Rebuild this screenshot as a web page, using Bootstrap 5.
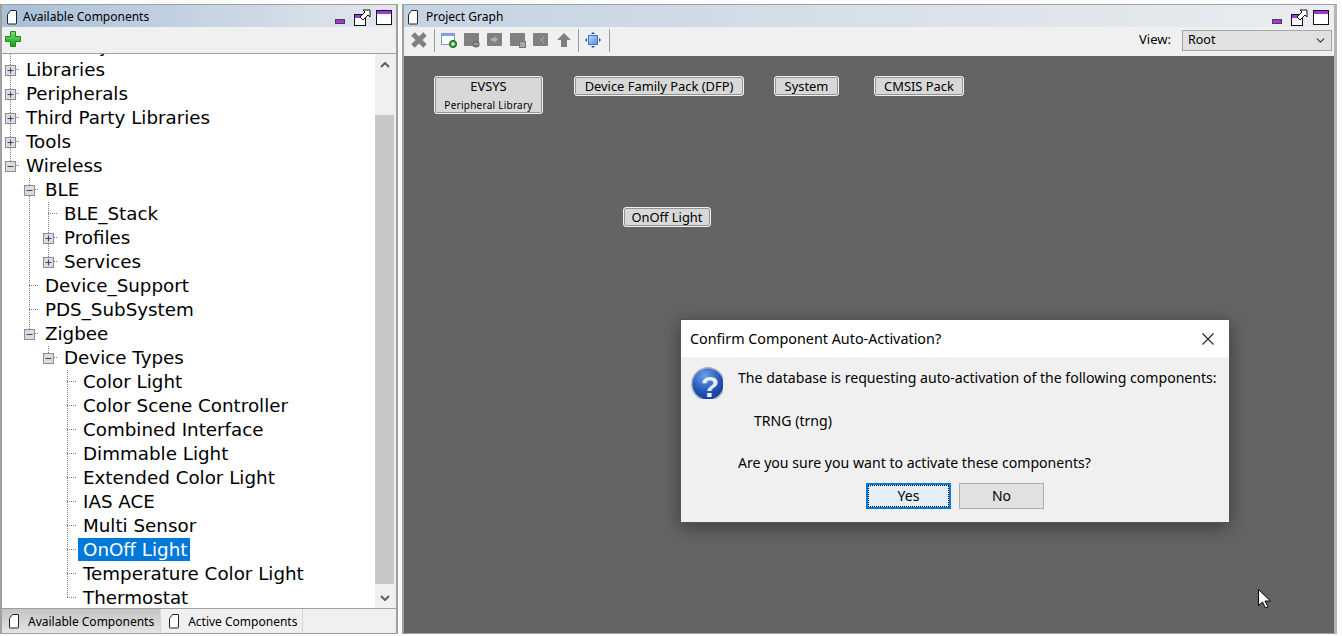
<!DOCTYPE html>
<html lang="en">
<head>
  <meta charset="UTF-8">
  <title>Project Graph</title>
  <meta name="viewport" content="width=device-width, initial-scale=1">
  <link href="https://cdn.jsdelivr.net/npm/bootstrap@5.3.3/dist/css/bootstrap.min.css" rel="stylesheet">
  <style>
    html, body { height: 100%; }
    body {
      background: #fbfbfb;
      font-family: "Noto Sans", sans-serif;
      font-size: 12px;
      color: #000;
      overflow: hidden;
    }
    .desk { height: 636px; padding: 4px 5px 2px 0; gap: 4px; position: relative; }
    .pane { border: 2px solid #a0a0a0; border-top-width: 1px; border-bottom-width: 1px; background: #f0f0f0; min-width: 0; }
    .pane-left { width: 398px; flex: none; }
    .pane-right { flex: 1 1 0; border-right: 3px solid #b4b4b4; }
    .pane-title { height: 22px; padding-left: 4px; padding-top: 2px; flex: none; }
    .pane-left .pane-title { background: linear-gradient(to right, #a8bfd8, #e3e7ec); }
    .pane-right .pane-title { background: linear-gradient(to right, #c4d3e2, #ebedef); padding-left: 3px; }
    .pane-title .title-text { margin-left: 6px; font-size: 12px; line-height: 20px; }
    .pane-right .title-text { margin-left: 8px; }
    .win-btns { margin-left: auto; padding-right: 4px; gap: 5px; }
    .pane-right .win-btns { padding-right: 5px; }
    .tool-left { height: 27px; padding: 0 0 2px 3px; flex: none; border-bottom: 1px solid #a0a0a0; }
    .tool-right { height: 29px; padding: 0 0 3px 6px; flex: none; gap: 7px; }
    .tool-sep { width: 1px; height: 23px; background: #a0a0a0; margin: 0 -1px; }
    .tool-fit { margin-right: 2px; }
    .view-label { margin-left: auto; margin-right: 1px; font-size: 13px; }
    .view-select {
      width: 150px; height: 21px; margin: 0 2px 0 3px;
      padding: 0 20px 0 5px;
      border: 1px solid #a6a6a6; border-radius: 0;
      background-color: #e1e1e1;
      background-position: right 5px center;
      background-size: 11px 9px;
      font-size: 12.5px; color: #000;
    }

    .tree-wrap { min-height: 0; background: #fff; }
    .tree-list { flex: 1 1 0; overflow: hidden; min-width: 0; }
    .tree-inner { margin: -20px 0 0 -1px; }
    .tree-row { height: 24px; font-family: "DejaVu Sans", sans-serif; font-size: 18.3px; line-height: 24px; white-space: nowrap; }
    .cell { width: 19px; height: 24px; flex: none; display: flex; align-items: center; justify-content: center; }
    .dot-v { background: repeating-linear-gradient(to bottom, #808080 0 1px, transparent 1px 2px) 9px 0 / 1px 100% no-repeat; }
    .dot-tee {
      background:
        repeating-linear-gradient(to bottom, #808080 0 1px, transparent 1px 2px) 9px 0 / 1px 100% no-repeat,
        repeating-linear-gradient(to right, #808080 0 1px, transparent 1px 2px) 9px 11px / 10px 1px no-repeat;
    }
    .dot-end {
      background:
        repeating-linear-gradient(to bottom, #808080 0 1px, transparent 1px 2px) 9px 0 / 1px 12px no-repeat,
        repeating-linear-gradient(to right, #808080 0 1px, transparent 1px 2px) 9px 11px / 10px 1px no-repeat;
    }
    .toggle { width: 11px; height: 11px; display: block; }
    .tree-label { padding: 0 3px 0 5px; margin-left: 1px; line-height: 23px; height: 23px; }
    .tree-label-on { background: #0078d7; color: #fff; }
    .scroll-track { width: 21px; flex: none; background: #f0f0f0; }
    .scroll-arrow { height: 21px; flex: none; padding-right: 2px; }
    .scroll-gap-top { height: 40px; flex: none; }
    .scroll-thumb { flex: 1 1 0; background: #c8c8c8; margin-right: 2px; }
    .scroll-gap-bottom { height: 3px; flex: none; }

    .tab-strip { height: 25px; flex: none; border-top: 1px solid #a0a0a0; background: #f0f0f0; }
    .tab-item { height: 24px; padding: 1px 5px 0 7px; gap: 9px; font-size: 12px; border-right: 1px solid #d4d4d4; }
    .tab-item:first-child { padding-left: 6px; padding-right: 6px; }
    .tab-item-on { background: linear-gradient(to bottom, #c4c4c4, #e4e4e4); }

    .graph { flex: 1 1 0; background: #646464; position: relative; overflow: hidden; }
    .graph-node {
      position: absolute;
      top: 20px;
      height: 20px;
      background: #d8d8d8;
      border: 1px solid #f0f0f0;
      border-radius: 3px;
      box-shadow: inset 0 0 0 1px #929292;
      font-size: 12.9px;
      line-height: 19px;
      text-align: center;
      white-space: nowrap;
    }
    .node-evsys { left: 30px; width: 109px; height: 38px; }
    .node-dfp { left: 170px; width: 170px; }
    .node-system { left: 370px; width: 65px; }
    .node-cmsis { left: 470px; width: 90px; }
    .node-onoff { left: 219px; top: 151px; width: 88px; }
    .node-sub { font-size: 10px; line-height: 14px; letter-spacing: .25px; margin-top: 2px; }

    .confirm-box {
      position: absolute; left: 681px; top: 320px; width: 548px; height: 202px;
      background: #f0f0f0;
      box-shadow: 0 0 0 1px #555, 0 4px 18px rgba(0,0,0,.45);
    }
    .confirm-head { height: 37px; background: #fff; padding-left: 9px; font-size: 14.35px; flex: none; }
    .confirm-close { margin-left: auto; margin-right: 15px; display: block; }
    .confirm-body { padding: 10px 0 0 10px; gap: 15px; font-size: 14.1px; }
    .confirm-msg { line-height: 20px; padding-top: 1px; }
    .confirm-line { margin-bottom: 22px; white-space: nowrap; }
    .confirm-line:first-child { margin-bottom: 23px; }
    .confirm-item { padding-left: 16px; }
    .confirm-btns { gap: 8px; position: absolute; left: 185px; top: 126px; }
    .dlg-btn {
      width: 85px; height: 26px; padding: 0; border-radius: 0;
      font-size: 14px; line-height: 22px; color: #000;
      background: #e1e1e1; border: 1px solid #adadad;
    }
    .dlg-btn-on {
      background: #e5edf5; border: 2px solid #0078d7;
      outline: 1px dotted #000; outline-offset: -3px;
    }
    .pointer { position: absolute; left: 1258px; top: 589px; display: block; }
  </style>
</head>
<body>

  <svg width="0" height="0" class="position-absolute">
    <defs>
      <symbol id="ico-doc" viewBox="0 0 11 15">
        <path d="M1.500 4.500 4.500.5h5.500q.5 0 .5.5v12.500q0 .5-.5.5h-8q-.5 0-.5-.5z" fill="#fff" stroke="#222"/>
      </symbol>
      <symbol id="ico-min" viewBox="0 0 10 5">
        <rect x=".5" y=".5" width="9" height="4" fill="#a235e6" stroke="#444"/>
      </symbol>
      <symbol id="ico-rest" viewBox="0 0 17 17">
        <rect x=".5" y="5.500" width="11" height="11" fill="#fff" stroke="#111"/>
        <rect x="1" y="6" width="10" height="3" fill="#a235e6"/>
        <path d="M6 8 11 3 9 1h7v7l-2-2-5 5z" fill="#fff" stroke="#111"/>
      </symbol>
      <symbol id="ico-max" viewBox="0 0 16 15">
        <rect x=".5" y=".5" width="15" height="14" fill="#fff" stroke="#111"/>
        <rect x="1" y="1" width="14" height="3" fill="#a235e6"/>
      </symbol>
      <symbol id="ico-plus" viewBox="0 0 11 11">
        <rect x=".5" y=".5" width="10" height="10" fill="#dcdcdc" stroke="#8c8c8c"/>
        <path d="M2.500 5.500h6M5.500 2.500v6" stroke="#2a4a8c"/>
      </symbol>
      <symbol id="ico-minus" viewBox="0 0 11 11">
        <rect x=".5" y=".5" width="10" height="10" fill="#dcdcdc" stroke="#8c8c8c"/>
        <path d="M2.500 5.500h6" stroke="#2a4a8c"/>
      </symbol>
      <symbol id="ico-win" viewBox="0 0 16 16">
        <rect x="0" y="1" width="15" height="13" rx="1" fill="#808080"/>
      </symbol>
      <linearGradient id="grad-green" x1="0" y1="0" x2="0" y2="1">
        <stop offset="0" stop-color="#7fe07f"/>
        <stop offset="1" stop-color="#12a012"/>
      </linearGradient>
      <linearGradient id="grad-fit" x1="0" y1="0" x2="1" y2="1">
        <stop offset="0" stop-color="#bcd8fb"/>
        <stop offset="1" stop-color="#4f8fe8"/>
      </linearGradient>
      <radialGradient id="grad-help" cx=".4" cy=".25" r=".85">
        <stop offset="0" stop-color="#6a9fe8"/>
        <stop offset=".55" stop-color="#2458b8"/>
        <stop offset="1" stop-color="#0f3490"/>
      </radialGradient>
      <clipPath id="clip-help"><rect width="32" height="32"/></clipPath>
    </defs>
  </svg>

  <div class="desk d-flex">

    <!-- left: component tree -->
    <div class="pane pane-left d-flex flex-column">
      <div class="pane-title d-flex align-items-center">
        <svg width="11" height="15"><use href="#ico-doc"/></svg>
        <span class="title-text">Available Components</span>
        <div class="win-btns d-flex align-items-center">
          <svg width="10" height="5" class="mt-2 me-1"><use href="#ico-min"/></svg>
          <svg width="17" height="17"><use href="#ico-rest"/></svg>
          <svg width="16" height="15"><use href="#ico-max"/></svg>
        </div>
      </div>
      <div class="tool-left d-flex align-items-center">
        <svg width="16" height="16" viewBox="0 0 16 16">
          <path d="M5.500.5h5v5h5v5h-5v5h-5v-5h-5v-5h5z" fill="url(#grad-green)" stroke="#1c8a1c"/>
        </svg>
      </div>
      <div class="tree-wrap d-flex flex-grow-1">
        <div class="tree-list">
          <div class="tree-inner">
            <div class="tree-row d-flex"><span class="cell dot-tee"></span><span class="tree-label">Harmony</span></div>
            <div class="tree-row d-flex"><span class="cell dot-tee"><svg class="toggle"><use href="#ico-plus"/></svg></span><span class="tree-label">Libraries</span></div>
            <div class="tree-row d-flex"><span class="cell dot-tee"><svg class="toggle"><use href="#ico-plus"/></svg></span><span class="tree-label">Peripherals</span></div>
            <div class="tree-row d-flex"><span class="cell dot-tee"><svg class="toggle"><use href="#ico-plus"/></svg></span><span class="tree-label">Third Party Libraries</span></div>
            <div class="tree-row d-flex"><span class="cell dot-tee"><svg class="toggle"><use href="#ico-plus"/></svg></span><span class="tree-label">Tools</span></div>
            <div class="tree-row d-flex"><span class="cell dot-end"><svg class="toggle"><use href="#ico-minus"/></svg></span><span class="tree-label">Wireless</span></div>
            <div class="tree-row d-flex"><span class="cell"></span><span class="cell dot-tee"><svg class="toggle"><use href="#ico-minus"/></svg></span><span class="tree-label">BLE</span></div>
            <div class="tree-row d-flex"><span class="cell"></span><span class="cell dot-v"></span><span class="cell dot-tee"></span><span class="tree-label">BLE_Stack</span></div>
            <div class="tree-row d-flex"><span class="cell"></span><span class="cell dot-v"></span><span class="cell dot-tee"><svg class="toggle"><use href="#ico-plus"/></svg></span><span class="tree-label">Profiles</span></div>
            <div class="tree-row d-flex"><span class="cell"></span><span class="cell dot-v"></span><span class="cell dot-end"><svg class="toggle"><use href="#ico-plus"/></svg></span><span class="tree-label">Services</span></div>
            <div class="tree-row d-flex"><span class="cell"></span><span class="cell dot-tee"></span><span class="tree-label">Device_Support</span></div>
            <div class="tree-row d-flex"><span class="cell"></span><span class="cell dot-tee"></span><span class="tree-label">PDS_SubSystem</span></div>
            <div class="tree-row d-flex"><span class="cell"></span><span class="cell dot-end"><svg class="toggle"><use href="#ico-minus"/></svg></span><span class="tree-label">Zigbee</span></div>
            <div class="tree-row d-flex"><span class="cell"></span><span class="cell"></span><span class="cell dot-end"><svg class="toggle"><use href="#ico-minus"/></svg></span><span class="tree-label">Device Types</span></div>
            <div class="tree-row d-flex"><span class="cell"></span><span class="cell"></span><span class="cell"></span><span class="cell dot-tee"></span><span class="tree-label">Color Light</span></div>
            <div class="tree-row d-flex"><span class="cell"></span><span class="cell"></span><span class="cell"></span><span class="cell dot-tee"></span><span class="tree-label">Color Scene Controller</span></div>
            <div class="tree-row d-flex"><span class="cell"></span><span class="cell"></span><span class="cell"></span><span class="cell dot-tee"></span><span class="tree-label">Combined Interface</span></div>
            <div class="tree-row d-flex"><span class="cell"></span><span class="cell"></span><span class="cell"></span><span class="cell dot-tee"></span><span class="tree-label">Dimmable Light</span></div>
            <div class="tree-row d-flex"><span class="cell"></span><span class="cell"></span><span class="cell"></span><span class="cell dot-tee"></span><span class="tree-label">Extended Color Light</span></div>
            <div class="tree-row d-flex"><span class="cell"></span><span class="cell"></span><span class="cell"></span><span class="cell dot-tee"></span><span class="tree-label">IAS ACE</span></div>
            <div class="tree-row d-flex"><span class="cell"></span><span class="cell"></span><span class="cell"></span><span class="cell dot-tee"></span><span class="tree-label">Multi Sensor</span></div>
            <div class="tree-row d-flex"><span class="cell"></span><span class="cell"></span><span class="cell"></span><span class="cell dot-tee"></span><span class="tree-label tree-label-on">OnOff Light</span></div>
            <div class="tree-row d-flex"><span class="cell"></span><span class="cell"></span><span class="cell"></span><span class="cell dot-tee"></span><span class="tree-label">Temperature Color Light</span></div>
            <div class="tree-row d-flex"><span class="cell"></span><span class="cell"></span><span class="cell"></span><span class="cell dot-end"></span><span class="tree-label">Thermostat</span></div>
          </div>
        </div>
        <div class="scroll-track d-flex flex-column">
          <div class="scroll-arrow d-flex align-items-center justify-content-center">
            <svg width="10" height="6" viewBox="0 0 10 6"><path d="M1 5 5 1l4 4" fill="none" stroke="#606060" stroke-width="2"/></svg>
          </div>
          <div class="scroll-gap-top"></div>
          <div class="scroll-thumb"></div>
          <div class="scroll-gap-bottom"></div>
          <div class="scroll-arrow d-flex align-items-center justify-content-center">
            <svg width="10" height="6" viewBox="0 0 10 6"><path d="M1 1l4 4 4-4" fill="none" stroke="#606060" stroke-width="2"/></svg>
          </div>
        </div>
      </div>
      <div class="tab-strip d-flex">
        <div class="tab-item tab-item-on d-flex align-items-center"><svg width="11" height="15"><use href="#ico-doc"/></svg>Available Components</div>
        <div class="tab-item d-flex align-items-center"><svg width="11" height="15"><use href="#ico-doc"/></svg>Active Components</div>
      </div>
    </div>

    <!-- right: project graph -->
    <div class="pane pane-right d-flex flex-column">
      <div class="pane-title d-flex align-items-center">
        <svg width="11" height="15"><use href="#ico-doc"/></svg>
        <span class="title-text">Project Graph</span>
        <div class="win-btns d-flex align-items-center">
          <svg width="10" height="5" class="mt-2 me-1"><use href="#ico-min"/></svg>
          <svg width="17" height="17"><use href="#ico-rest"/></svg>
          <svg width="16" height="15"><use href="#ico-max"/></svg>
        </div>
      </div>
      <div class="tool-right d-flex align-items-center">
        <svg width="18" height="18" viewBox="0 0 18 18"><path d="M3 3l12 12M15 3 3 15" stroke="#808080" stroke-width="5"/></svg>
        <span class="tool-sep"></span>
        <svg width="16" height="16" viewBox="0 0 16 16">
          <rect x=".5" y="1.500" width="13" height="11" fill="#fff" stroke="#7c9ccb"/>
          <rect x="1" y="2" width="12" height="2" fill="#7fa6dc"/>
          <circle cx="12" cy="12" r="3.600" fill="#3c9a3c" stroke="#1f6a1f"/>
          <path d="M10 12h4M12 10v4" stroke="#fff"/>
        </svg>
        <svg width="16" height="16" viewBox="0 0 16 16">
          <use href="#ico-win"/>
          <circle cx="12" cy="12" r="3.600" fill="#707070"/>
          <path d="M10 12h4" stroke="#c8c8c8"/>
        </svg>
        <svg width="16" height="16" viewBox="0 0 16 16">
          <use href="#ico-win"/>
          <path d="M4 6h3V4l4 3.500-4 3.500V9H4z" fill="#b0b0b0"/>
        </svg>
        <svg width="16" height="16" viewBox="0 0 16 16">
          <use href="#ico-win"/>
          <rect x="9.500" y="9.500" width="6" height="6" fill="#a8a8a8" stroke="#777"/>
        </svg>
        <svg width="16" height="16" viewBox="0 0 16 16">
          <use href="#ico-win"/>
          <path d="M11 5 8 8l3 3" fill="none" stroke="#b0b0b0"/>
        </svg>
        <svg width="16" height="16" viewBox="0 0 16 16"><path d="M8 1l7 7h-4v7H5V8H1z" fill="#808080"/></svg>
        <span class="tool-sep"></span>
        <svg class="tool-fit" width="16" height="16" viewBox="0 0 16 16">
          <rect x="3.500" y="3.500" width="9" height="9" fill="url(#grad-fit)" stroke="#3f74c8"/>
          <path d="M8 0l2 2H6zM8 16l2-2H6zM0 8l2-2v4zM16 8l-2-2v4z" fill="#1f4fa8"/>
        </svg>
        <span class="tool-sep"></span>
        <span class="view-label">View:</span>
        <select class="form-select view-select"><option>Root</option></select>
      </div>
      <div class="graph">
        <div class="graph-node node-evsys">EVSYS<div class="node-sub">Peripheral Library</div></div>
        <div class="graph-node node-dfp">Device Family Pack (DFP)</div>
        <div class="graph-node node-system">System</div>
        <div class="graph-node node-cmsis">CMSIS Pack</div>
        <div class="graph-node node-onoff">OnOff Light</div>
      </div>
    </div>

    <!-- confirm dialog -->
    <div class="confirm-box d-flex flex-column">
      <div class="confirm-head d-flex align-items-center">
        <span>Confirm Component Auto-Activation?</span>
        <svg class="confirm-close" width="12" height="12" viewBox="0 0 12 12"><path d="M.5.500l11 11M11.500.500l-11 11" stroke="#222" stroke-width="1.100"/></svg>
      </div>
      <div class="confirm-body d-flex position-relative flex-grow-1">
        <svg width="32" height="42" viewBox="0 0 32 42" class="flex-shrink-0">
          <g clip-path="url(#clip-help)">
            <circle cx="17" cy="17" r="16.300" fill="url(#grad-help)" stroke="#b0b8c4" stroke-width="1.500"/>
          </g>
          <text x="19" y="30" text-anchor="middle" font-family="Liberation Sans, sans-serif" font-weight="700" font-size="30" fill="#e9eef8">?</text>
        </svg>
        <div class="confirm-msg">
          <div class="confirm-line">The database is requesting auto-activation of the following components:</div>
          <div class="confirm-line confirm-item">TRNG (trng)</div>
          <div class="confirm-line">Are you sure you want to activate these components?</div>
        </div>
        <div class="confirm-btns d-flex">
          <button type="button" class="btn dlg-btn dlg-btn-on">Yes</button>
          <button type="button" class="btn dlg-btn">No</button>
        </div>
      </div>
    </div>

    <svg class="pointer" width="13" height="20" viewBox="0 0 13 20">
      <path d="M.5.500v16l4-3.500 3 6 2.500-1.200-3-5.800h5.500z" fill="#fff" stroke="#000"/>
    </svg>
  </div>

  <script src="https://cdn.jsdelivr.net/npm/bootstrap@5.3.3/dist/js/bootstrap.bundle.min.js"></script>
</body>
</html>
